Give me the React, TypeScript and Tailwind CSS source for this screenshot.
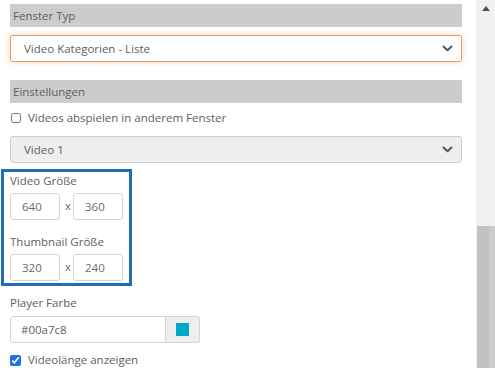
import { useState } from "react";

function Chevron() {
  return (
    <svg width="11" height="7" viewBox="0 0 11 7" className="shrink-0">
      <path d="M1.5 1.5 L5.5 5.2 L9.5 1.5" fill="none" stroke="#555" strokeWidth="2" strokeLinecap="round" strokeLinejoin="round" />
    </svg>
  );
}

function SectionBar({ title }: { title: string }) {
  return (
    <div className="flex h-[23px] w-[452px] items-center bg-[#cccccc] pl-[3px] text-[11.5px] text-[#5e5e5e]">
      {title}
    </div>
  );
}

function SizeInput({ value }: { value: string }) {
  return (
    <div className="flex h-[27px] w-[50px] items-center rounded-[3px] border border-[#d4d4d4] bg-white pl-[11px] text-[11.5px] text-[#6a6a6a]">
      {value}
    </div>
  );
}

export default function App() {
  const [openOther, setOpenOther] = useState(false);
  const [showLength, setShowLength] = useState(true);

  return (
    <div className="flex h-[368px] w-[495px] overflow-hidden bg-white font-['Open_Sans',sans-serif]">
      <div className="flex w-[476px] flex-col pt-[4px]">
        <div className="ml-[10px]">
          <SectionBar title="Fenster Typ" />
        </div>

        <div className="ml-[10px] mt-[8px] flex h-[27px] w-[452px] items-center justify-between rounded-[3px] border border-[#dc9c6e] bg-white pl-[13px] pr-[8px] text-[11.5px] text-[#5e5e5e] shadow-[0_0_6px_rgba(245,150,70,0.45)]">
          <span>Video Kategorien - Liste</span>
          <Chevron />
        </div>

        <div className="ml-[10px] mt-[18px]">
          <SectionBar title="Einstellungen" />
        </div>

        <label className="ml-[11px] mt-[7px] flex h-[16px] items-center gap-[7px] text-[11.5px] text-[#5e5e5e]">
          <input
            type="checkbox"
            checked={openOther}
            onChange={(e) => setOpenOther(e.target.checked)}
            className="h-[10px] w-[10px] accent-[#1a73e8]"
          />
          Videos abspielen in anderem Fenster
        </label>

        <div className="ml-[10px] mt-[10px] flex h-[27px] w-[452px] items-center justify-between rounded-[3px] border border-[#cfcfcf] bg-[#eeeeee] pl-[13px] pr-[8px] text-[11.5px] text-[#5e5e5e]">
          <span>Video 1</span>
          <Chevron />
        </div>

        <div className="ml-[1px] mt-[6px] w-[131px] border-[3px] border-[#1f6eb3] pb-[2px] pl-[6px] pt-[1px]">
          <div className="flex h-[16px] items-center text-[11.5px] text-[#5e5e5e]">Video Größe</div>
          <div className="mt-[4px] flex items-center gap-[5px]">
            <SizeInput value="640" />
            <span className="w-[3px] text-[11px] text-[#6a6a6a]">x</span>
            <SizeInput value="360" />
          </div>
          <div className="mt-[14px] flex h-[16px] items-center text-[11.5px] text-[#5e5e5e]">Thumbnail Größe</div>
          <div className="mt-[4px] flex items-center gap-[5px]">
            <SizeInput value="320" />
            <span className="w-[3px] text-[11px] text-[#6a6a6a]">x</span>
            <SizeInput value="240" />
          </div>
        </div>

        <div className="ml-[10px] mt-[9px] flex h-[16px] items-center text-[11.5px] text-[#5e5e5e]">Player Farbe</div>
        <div className="ml-[10px] mt-[5px] flex h-[27px] w-[190px]">
          <div className="flex flex-1 items-center rounded-l-[3px] border border-[#d4d4d4] bg-white pl-[10px] text-[11.5px] text-[#5e5e5e]">
            #00a7c8
          </div>
          <div className="flex w-[34px] items-center justify-center rounded-r-[3px] border border-l-0 border-[#d4d4d4] bg-[#eeeeee]">
            <div className="h-[13px] w-[13px] bg-[#00a7c8]" />
          </div>
        </div>

        <label className="ml-[10px] mt-[9px] flex h-[16px] items-center gap-[7px] text-[11.5px] text-[#5e5e5e]">
          <input
            type="checkbox"
            checked={showLength}
            onChange={(e) => setShowLength(e.target.checked)}
            className="h-[11px] w-[11px] accent-[#1a73e8]"
          />
          Videolänge anzeigen
        </label>
      </div>

      <div className="flex w-[19px] flex-col bg-[#f1f1f1]">
        <div className="flex h-[16px] items-center justify-center">
          <svg width="8" height="5" viewBox="0 0 8 5">
            <path d="M0 5 L4 0 L8 5 Z" fill="#505050" />
          </svg>
        </div>
        <div className="mt-[210px] flex flex-1">
          <div className="ml-[1px] w-[12px] bg-[#c1c1c1]" />
          <div className="w-[6px] bg-[#cbcbcb]" />
        </div>
      </div>
    </div>
  );
}
